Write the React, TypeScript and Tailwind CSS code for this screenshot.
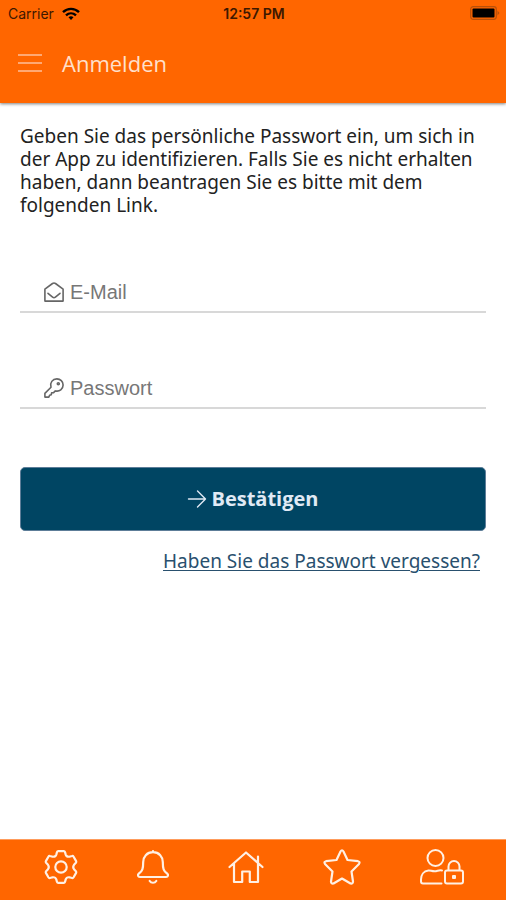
import React from "react";

type IconProps = { className?: string };

function WifiIcon({ className }: IconProps) {
  return (
    <svg viewBox="0 0 18 13" className={className} fill="none" stroke="currentColor" strokeWidth="2.4">
      <path d="M1 5.2C5.6.7 12.4.7 17 5.2" />
      <path d="M4 8.4c2.9-2.7 7.100-2.700 10 0" />
      <path d="M6.500 10.300Q9 8 11.500 10.300L9 13z" fill="currentColor" stroke="none" />
    </svg>
  );
}

function BatteryIcon({ className }: IconProps) {
  return (
    <svg viewBox="0 0 30 14" className={className}>
      <rect x=".7" y=".7" width="25.600" height="12.600" rx="2.500" fill="none" stroke="#b8500a" strokeWidth="1.200" />
      <rect x="2.500" y="2.500" width="22" height="9" rx="1" fill="#000" />
      <path d="M27.500 4.500 29.500 7l-2 2.500z" fill="#b8500a" />
    </svg>
  );
}

function Icon({ className, viewBox, width, children }: IconProps & { viewBox: string; width: number; children: React.ReactNode }) {
  return (
    <svg
      viewBox={viewBox}
      className={className}
      fill="none"
      stroke="currentColor"
      strokeWidth={width}
      strokeLinecap="round"
      strokeLinejoin="round"
      aria-hidden="true"
    >
      {children}
    </svg>
  );
}

function MailIcon({ className }: IconProps) {
  return (
    <Icon className={className} viewBox="0 0 20 20" width={1.6}>
      <path d="M.9 7.200 8.500 1.500q1.500-1 3 0l7.600 5.700v11.900H.9z" />
      <path d="m4 11.300 4.600 3.800q1.400 1 2.800 0l4.600-3.800" />
    </Icon>
  );
}

function KeyIcon({ className }: IconProps) {
  return (
    <Icon className={className} viewBox="0 0 20 20" width={1.6}>
      <path d="M7 9.200C5.600 4.800 8.500.9 12.900.9c3.500 0 6.200 2.600 6.200 6 0 4.200-3.600 7.100-7.800 6L9.600 14.600 7.600 14.800 7.300 16.700 5.600 17.200 4.800 19.100H.9V15.400z" />
      <circle cx="14.300" cy="5.700" r="1" />
    </Icon>
  );
}

const tabs = [
  {
    label: "Einstellungen",
    icon: (
      <Icon className="h-[34px] w-[34px]" viewBox="-17 -17 34 34" width={2.2}>
        <path d="M-4.700-12.400-4-15Q-3.700-15.900-2.700-15.900H2.700Q3.700-15.900 4-15L4.700-12.400Q5.500-10 8.400-10.300L11-11Q12-11.300 12.600-10.300L15.100-5.900Q15.600-5 14.900-4.200L13-2.200Q11.400 0 13 2.200L14.900 4.200Q15.600 5 15.100 5.900L12.600 10.300Q12 11.300 11 11L8.400 10.300Q5.500 10 4.700 12.400L4 15Q3.700 15.900 2.700 15.900H-2.700Q-3.700 15.900-4 15L-4.700 12.400Q-5.500 10-8.400 10.300L-11 11Q-12 11.300-12.600 10.300L-15.100 5.900Q-15.600 5-14.900 4.200L-13 2.200Q-11.400 0-13-2.200L-14.900-4.200Q-15.600-5-15.100-5.900L-12.600-10.300Q-12-11.300-11-11L-8.400-10.300Q-5.500-10-4.700-12.400z" />
        <circle r="5.700" />
      </Icon>
    ),
  },
  {
    label: "Mitteilungen",
    icon: (
      <Icon className="h-[34px] w-8" viewBox="0 0 32 34" width={2.2}>
        <path d="M16 1.200v1M16 2.200C9.800 2.200 6.200 6.800 6.200 12c0 6.800-.8 9.200-4.300 11.500-1.600 1.300-1 3.500 1 3.500h26.200c2 0 2.600-2.200 1-3.500-3.500-2.300-4.300-4.700-4.300-11.500 0-5.200-3.600-9.800-9.800-9.800z" />
        <path d="M12.700 31c1.500 2.300 5.100 2.300 6.600 0" />
      </Icon>
    ),
  },
  {
    label: "Startseite",
    icon: (
      <Icon className="h-[34px] w-9" viewBox="0 0 36 34" width={2.2}>
        <path d="M1.500 17 18 2.500 34.500 17M30 12.500V6.500M6 13.500V32h8.200V21.500h7.600V32H30V13.500" />
      </Icon>
    ),
  },
  {
    label: "Favoriten",
    icon: (
      <Icon className="h-9 w-[38px]" viewBox="0 0 38 36" width={2.2}>
        <path d="M17.500 2.500q1.500-2.500 3 0L24.500 11l10.500 1.200q2.500.6 1 2.800L28.500 22.500 30 32.500q0 2.500-2.500 2L19 29.500 10.500 34.500q-2.500.5-2.500-2L9.500 22.500 2 15Q.5 12.800 3 12.200L13.500 11z" />
      </Icon>
    ),
  },
  {
    label: "Konto",
    icon: (
      <Icon className="h-9 w-11" viewBox="0 0 44 36" width={2}>
        <circle cx="15.500" cy="9" r="8" />
        <path d="M22 21.500c-3.200-.8-4.500.8-7.500.8-2.800 0-4-1-6-.8-5 .5-7.500 4.500-7.500 9V32.500q0 2 2 2H21.500" />
        <rect x="25" y="21.500" width="18" height="13" rx="2" />
        <path d="M28.500 21V17.500a5.500 5.500 0 0 1 11 0V21" />
        <rect x="33" y="27" width="2" height="2" fill="currentColor" />
      </Icon>
    ),
  },
];

function Field({ id, type, label, icon }: { id: string; type: string; label: string; icon: React.ReactNode }) {
  return (
    <div className="flex h-10 items-center gap-[6px] border-b-2 border-[#d8d8d8] pl-6 text-[#666]">
      <label htmlFor={id} aria-label={label}>
        {icon}
      </label>
      <input
        id={id}
        type={type}
        placeholder={label}
        className="min-w-0 flex-1 bg-transparent font-['Liberation_Sans',Arial,sans-serif] text-[20px] leading-6 outline-none placeholder:text-[#777]"
      />
    </div>
  );
}

export default function App() {
  return (
    <div className="flex min-h-screen flex-col bg-white font-['Open_Sans',sans-serif]">
      <header className="relative bg-[#ff6600] shadow-[0_1px_3px_rgba(0,0,0,0.5)]">
        {/* Status bar */}
        <div className="grid h-[26px] grid-cols-3 items-center pr-[6px] pl-2 font-[Inter,sans-serif] text-[14px] text-[#3d1800]">
          <div className="flex items-center gap-2">
            <span>Carrier</span>
            <WifiIcon className="h-[13px] w-[18px] text-black" />
          </div>
          <span className="text-center font-semibold">12:57 PM</span>
          <BatteryIcon className="h-[14px] w-[30px] justify-self-end" />
        </div>
        {/* Title bar */}
        <div className="flex h-[77px] items-center gap-5 px-[18px] pb-1 text-[#ffe0cc]">
          <button type="button" aria-label="Menü" className="flex w-6 flex-col gap-[6px]">
            <span className="h-[2px] bg-[#ffa873]" />
            <span className="h-[2px] bg-[#ffa873]" />
            <span className="h-[2px] bg-[#ffa873]" />
          </button>
          <h1 className="text-[22px] leading-7">Anmelden</h1>
        </div>
      </header>

      <main className="flex-1 px-5 pt-[22px]">
        <p className="font-['Noto_Sans',sans-serif] text-[19px] leading-[23px] text-[#222]">
          Geben Sie das persönliche Passwort ein, um sich in der App zu identifizieren. Falls Sie es nicht erhalten
          haben, dann beantragen Sie es bitte mit dem folgenden Link.
        </p>

        <form className="pt-14" onSubmit={(e) => e.preventDefault()}>
          <div className="flex flex-col gap-14">
            <Field id="email" type="email" label="E-Mail" icon={<MailIcon className="h-5 w-5" />} />
            <Field id="password" type="password" label="Passwort" icon={<KeyIcon className="h-5 w-5" />} />
          </div>
          <button
            type="submit"
            className="mt-[58px] flex h-16 w-full items-center justify-center gap-1 rounded-[5px] border border-[#5d7d98] bg-[#004563] text-[20px] font-bold text-[#e0eaf5]"
          >
            <Icon className="h-5 w-5" viewBox="0 0 20 20" width={1.4}>
              <path d="M1.500 10h17M10.500 2l8 8-8 8" />
            </Icon>
            Bestätigen
          </button>
        </form>

        <div className="pt-4 pr-[6px] text-right">
          <a
            href="#passwort"
            className="font-['Noto_Sans',sans-serif] text-[19px] leading-7 text-[#29506e] underline decoration-1 underline-offset-2"
          >
            Haben Sie das Passwort vergessen?
          </a>
        </div>
      </main>

      <nav className="flex h-[61px] items-center justify-between border-t border-[#ff9c5c] bg-[#ff6600] pr-[42px] pl-11 pb-[6px] text-[#fff0e4]">
        {tabs.map((tab) => (
          <button key={tab.label} type="button" aria-label={tab.label}>
            {tab.icon}
          </button>
        ))}
      </nav>
    </div>
  );
}
